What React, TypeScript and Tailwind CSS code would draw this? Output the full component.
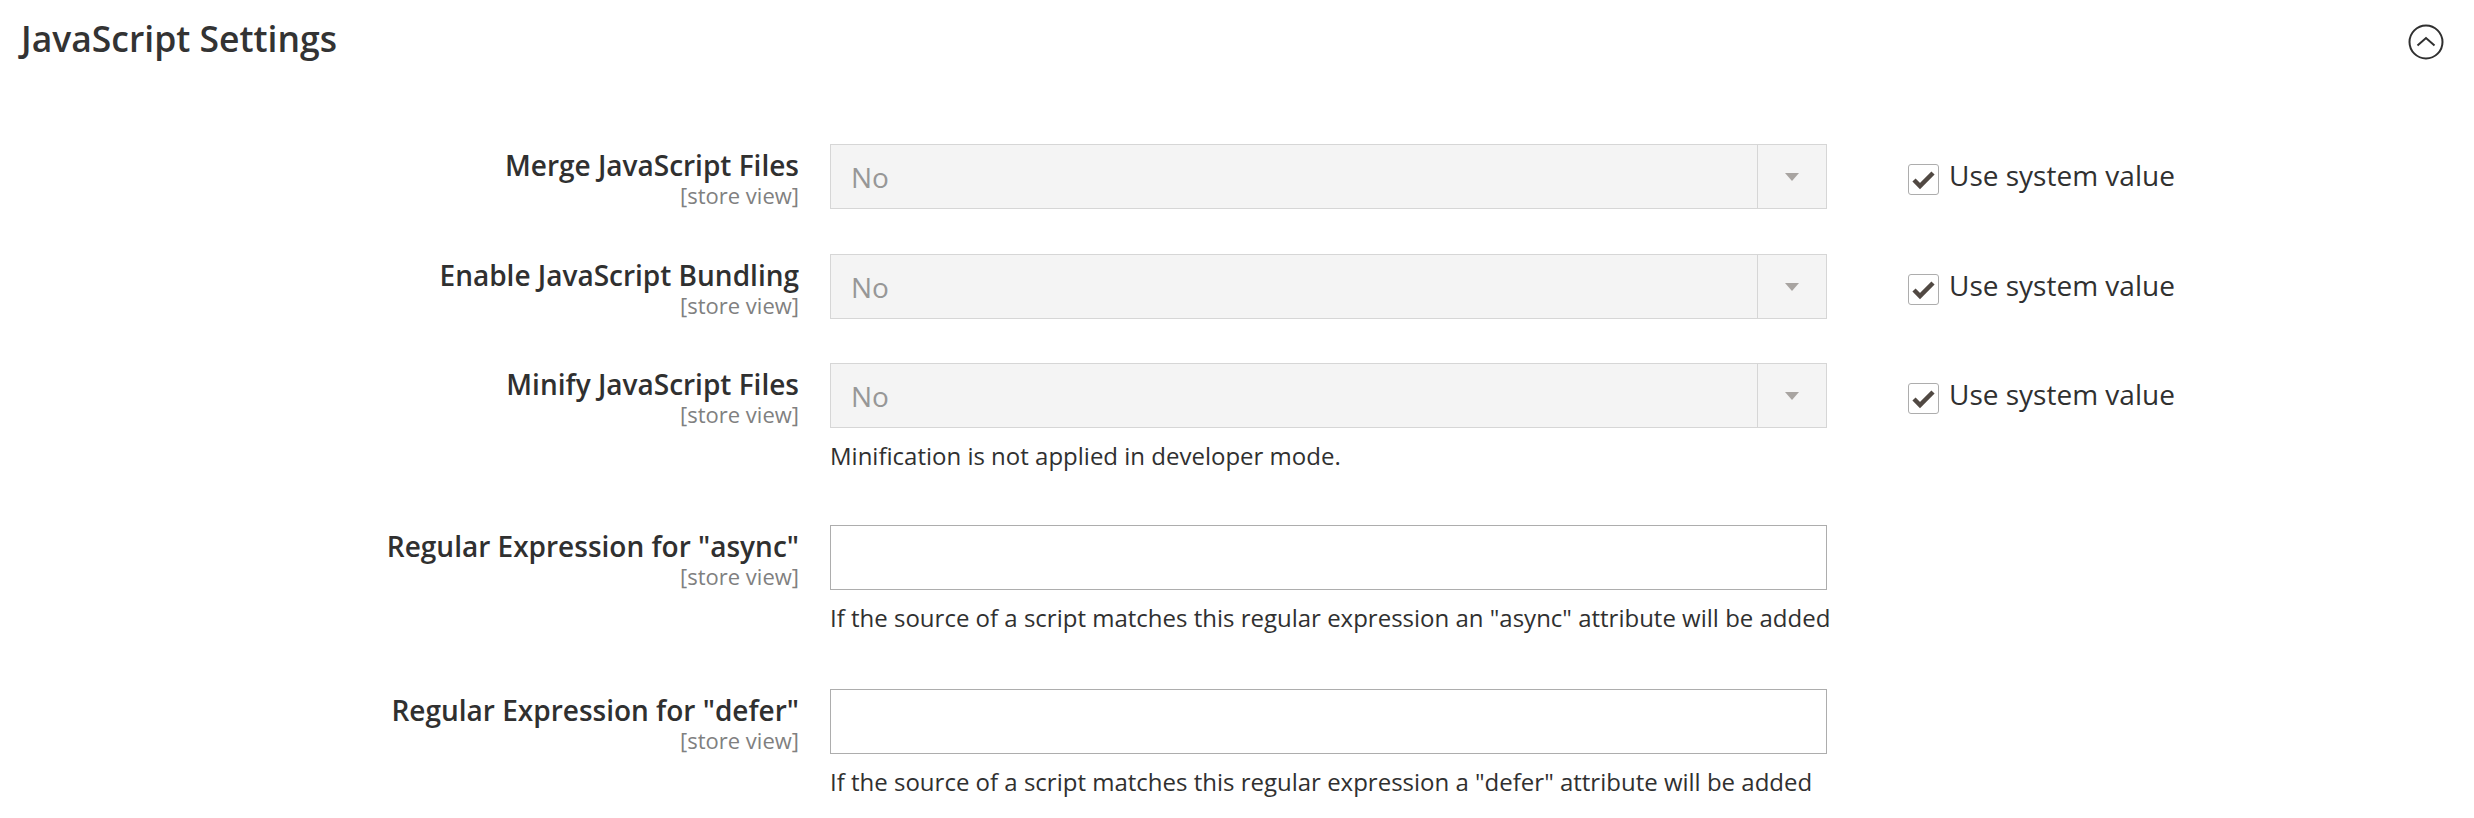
import React from "react";

type Row = {
  label: string;
  kind: "select" | "input";
  note?: string;
  gap: string;
};

const rows: Row[] = [
  { label: "Merge JavaScript Files", kind: "select", gap: "mt-0" },
  { label: "Enable JavaScript Bundling", kind: "select", gap: "mt-[45px]" },
  {
    label: "Minify JavaScript Files",
    kind: "select",
    note: "Minification is not applied in developer mode.",
    gap: "mt-[44px]",
  },
  {
    label: 'Regular Expression for "async"',
    kind: "input",
    note: 'If the source of a script matches this regular expression an "async" attribute will be added',
    gap: "mt-[51px]",
  },
  {
    label: 'Regular Expression for "defer"',
    kind: "input",
    note: 'If the source of a script matches this regular expression a "defer" attribute will be added',
    gap: "mt-[53px]",
  },
];

const CollapseIcon = () => (
  <svg width="36" height="36" viewBox="0 0 36 36" fill="none">
    <circle cx="18" cy="18" r="16.5" stroke="#303030" strokeWidth="2" />
    <path d="M9.5 21.5 L18 14 L26.5 21.5" stroke="#303030" strokeWidth="2" />
  </svg>
);

const Checkbox = () => (
  <span className="flex h-[31px] w-[31px] shrink-0 items-center justify-center rounded-[3px] border border-[#adadad] bg-white">
    <svg width="29" height="29" viewBox="0 0 29 29" fill="none">
      <path d="M5 15 L11 21 L24 8" stroke="#514943" strokeWidth="4.5" />
    </svg>
  </span>
);

const DisabledSelect = () => (
  <div className="flex h-[65px] w-full items-stretch border border-[#d6d6d6] bg-[#f4f4f4]">
    <span className="flex flex-1 items-center pl-[20px] text-[28px] text-[#979797]">No</span>
    <span className="flex w-[69px] items-center justify-center border-l border-[#d6d6d6]">
      <svg width="14" height="8" viewBox="0 0 14 8">
        <path d="M0 0 H14 L7 8 Z" fill="#a8a4a1" />
      </svg>
    </span>
  </div>
);

const TextInput = () => (
  <input
    type="text"
    className="block h-[65px] w-full border border-[#adadad] bg-white px-[20px] text-[28px] text-[#303030] outline-none"
  />
);

export default function App() {
  return (
    <div className="min-h-screen w-full bg-white font-['Open_Sans',sans-serif] text-[#303030]">
      <div className="flex items-start justify-between pl-[21px] pr-[30px] pt-[17px]">
        <h2 className="text-[35.5px] font-semibold leading-[43px] text-[#333333]">JavaScript Settings</h2>
        <div className="mt-[7px]">
          <CollapseIcon />
        </div>
      </div>

      <div className="mt-[84px] flex flex-col">
        {rows.map((row) => (
          <div key={row.label} className={`flex items-start ${row.gap}`}>
            <div className="flex w-[799px] shrink-0 flex-col items-end text-right">
              <span className="text-[28px] font-semibold leading-[42px]">{row.label}</span>
              <span className="-mt-[2px] text-[22px] leading-[22px] text-[#808080]">[store view]</span>
            </div>
            <div className="ml-[31px] w-[997px] shrink-0">
              {row.kind === "select" ? <DisabledSelect /> : <TextInput />}
              {row.note && (
                <p className="mt-[10px] whitespace-nowrap text-[24px] leading-[36px] text-[#303030]">{row.note}</p>
              )}
            </div>
            {row.kind === "select" && (
              <label className="ml-[81px] flex items-start gap-[10px]">
                <span className="mt-[20px]">
                  <Checkbox />
                </span>
                <span className="mt-[10px] text-[28px] leading-[42px]">Use system value</span>
              </label>
            )}
          </div>
        ))}
      </div>
    </div>
  );
}
